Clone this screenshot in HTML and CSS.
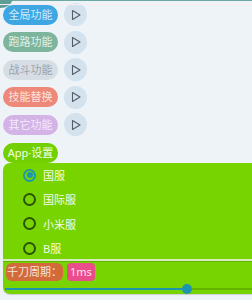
FILE: index.html
```html
<!DOCTYPE html>
<html>
<head>
<meta charset="utf-8">
<link rel="stylesheet" href="styles.css">
</head>
<body>
<div class="topbar"></div>
<div class="corner"></div>
<div class="pinkline"></div>
<div class="list">
  <div class="row"><span class="pill blue">全局功能</span><span class="play"><svg width="12" height="12" viewBox="0 0 12 12"><path d="M2.5 1.5 L10 6 L2.5 10.5 Z" fill="none" stroke="#555e68" stroke-width="1.1" stroke-linejoin="round"/></svg></span></div>
  <div class="row"><span class="pill sage">跑路功能</span><span class="play"><svg width="12" height="12" viewBox="0 0 12 12"><path d="M2.5 1.5 L10 6 L2.5 10.5 Z" fill="none" stroke="#555e68" stroke-width="1.1" stroke-linejoin="round"/></svg></span></div>
  <div class="row"><span class="pill grey">战斗功能</span><span class="play"><svg width="12" height="12" viewBox="0 0 12 12"><path d="M2.5 1.5 L10 6 L2.5 10.5 Z" fill="none" stroke="#555e68" stroke-width="1.1" stroke-linejoin="round"/></svg></span></div>
  <div class="row"><span class="pill salmon">技能替换</span><span class="play"><svg width="12" height="12" viewBox="0 0 12 12"><path d="M2.5 1.5 L10 6 L2.5 10.5 Z" fill="none" stroke="#555e68" stroke-width="1.1" stroke-linejoin="round"/></svg></span></div>
  <div class="row"><span class="pill lilac">其它功能</span><span class="play"><svg width="12" height="12" viewBox="0 0 12 12"><path d="M2.5 1.5 L10 6 L2.5 10.5 Z" fill="none" stroke="#555e68" stroke-width="1.1" stroke-linejoin="round"/></svg></span></div>
  <div class="approw"><span class="pill green">App·设置</span></div>
</div>
<div class="panel">
  <div class="radios">
    <div class="radio"><span class="dot on"></span><span>国服</span></div>
    <div class="radio"><span class="dot"></span><span>国际服</span></div>
    <div class="radio"><span class="dot"></span><span>小米服</span></div>
    <div class="radio"><span class="dot"></span><span>B服</span></div>
  </div>
  <div class="period">
    <div class="chips"><span class="chip orange">千刀周期：</span><span class="chip pink">1ms</span></div>
    <div class="slider"><div class="track"><div class="fill" style="width:182px"></div><div class="thumb" style="left:182px"></div></div></div>
  </div>
</div>
</body>
</html>
```

FILE: styles.css
```css
html, body {
  margin: 0;
  padding: 0;
  background: #eef3f8;
  font-family: "Noto Sans", "Noto Sans CJK SC", sans-serif;
  overflow: hidden;
}
body {
  width: 252px;
  height: 300px;
  position: relative;
}
.topbar {
  height: 1px;
  background: #6fa9a2;
}
.corner {
  position: absolute;
  left: 0;
  top: 0;
  width: 12px;
  height: 8px;
  background: #5f9e94;
  border-bottom-right-radius: 12px 8px;
}
.pinkline {
  position: absolute;
  left: 0;
  right: 0;
  top: 4px;
  height: 1px;
  background: #f7ecf2;
}
.list {
  padding-left: 3px;
}
.row {
  height: 27.5px;
  display: flex;
  align-items: center;
  gap: 6px;
}
.approw {
  display: flex;
  margin-top: 4px;
  height: 20px;
}
.pill {
  box-sizing: border-box;
  height: 20px;
  line-height: 20px;
  border-radius: 10px;
  font-size: 11px;
  width: 55px;
  text-align: center;
  white-space: nowrap;
}
.blue { background: #3ea6e3; color: #cfeafa; }
.sage { background: #7db59c; color: #e2f1ea; }
.grey { background: #d6dde4; color: #9aa3ac; }
.salmon { background: #ee8878; color: #fde3dd; }
.lilac { background: #d4b4e7; color: #f4e9fb; }
.green { background: #72d000; color: #f4ffe8; }
.play {
  width: 23px;
  height: 23px;
  border-radius: 50%;
  background: #d4e2ee;
  display: flex;
  align-items: center;
  justify-content: center;
}
.play svg { margin-left: 1px; }
.panel {
  margin-top: 0.5px;
  margin-left: 3px;
  width: 260px;
  height: 131px;
  background: #77d400;
  border-radius: 7px 0 0 7px;
  box-shadow: 0 1px 1px rgba(0,0,0,0.15);
  overflow: hidden;
}
.radios {
  height: 96px;
  padding-left: 20px;
}
.radio {
  height: 24.3px;
  display: flex;
  align-items: center;
  gap: 7px;
  color: #f3fbe8;
  font-size: 11px;
}
.dot {
  width: 9px;
  height: 9px;
  border: 2px solid #2c5400;
  border-radius: 50%;
  position: relative;
  box-sizing: content-box;
}
.dot.on {
  border-color: #1d98ab;
}
.dot.on::after {
  content: "";
  position: absolute;
  left: 1.5px;
  top: 1.5px;
  width: 6px;
  height: 6px;
  border-radius: 50%;
  background: #1d98ab;
}
.period {
  border-top: 2px solid #d3ecb8;
  box-shadow: inset 0 1px 0 #62b400;
  padding-top: 2px;
}
.chips {
  display: flex;
  gap: 4px;
  padding-left: 3px;
}
.chip {
  height: 18px;
  line-height: 18px;
  border-radius: 4px;
  font-size: 11px;
  padding: 0 3px;
  white-space: nowrap;
}
.orange { background: #d26a3b; color: #f8e2d8; border-radius: 6px; padding: 0 1px; }
.pink { background: #eb4c8c; color: #fde4ef; }
.slider {
  padding: 3px 0 0 2px;
}
.track {
  position: relative;
  height: 10px;
}
.track::before {
  content: "";
  position: absolute;
  left: 0;
  right: 0;
  top: 4px;
  height: 2px;
  background: #62b200;
}
.fill {
  position: absolute;
  left: 0;
  top: 4px;
  height: 2px;
  background: #1c96b0;
}
.thumb {
  position: absolute;
  top: 0;
  width: 10px;
  height: 10px;
  margin-left: -5px;
  border-radius: 50%;
  background: #1c96b0;
}
```
